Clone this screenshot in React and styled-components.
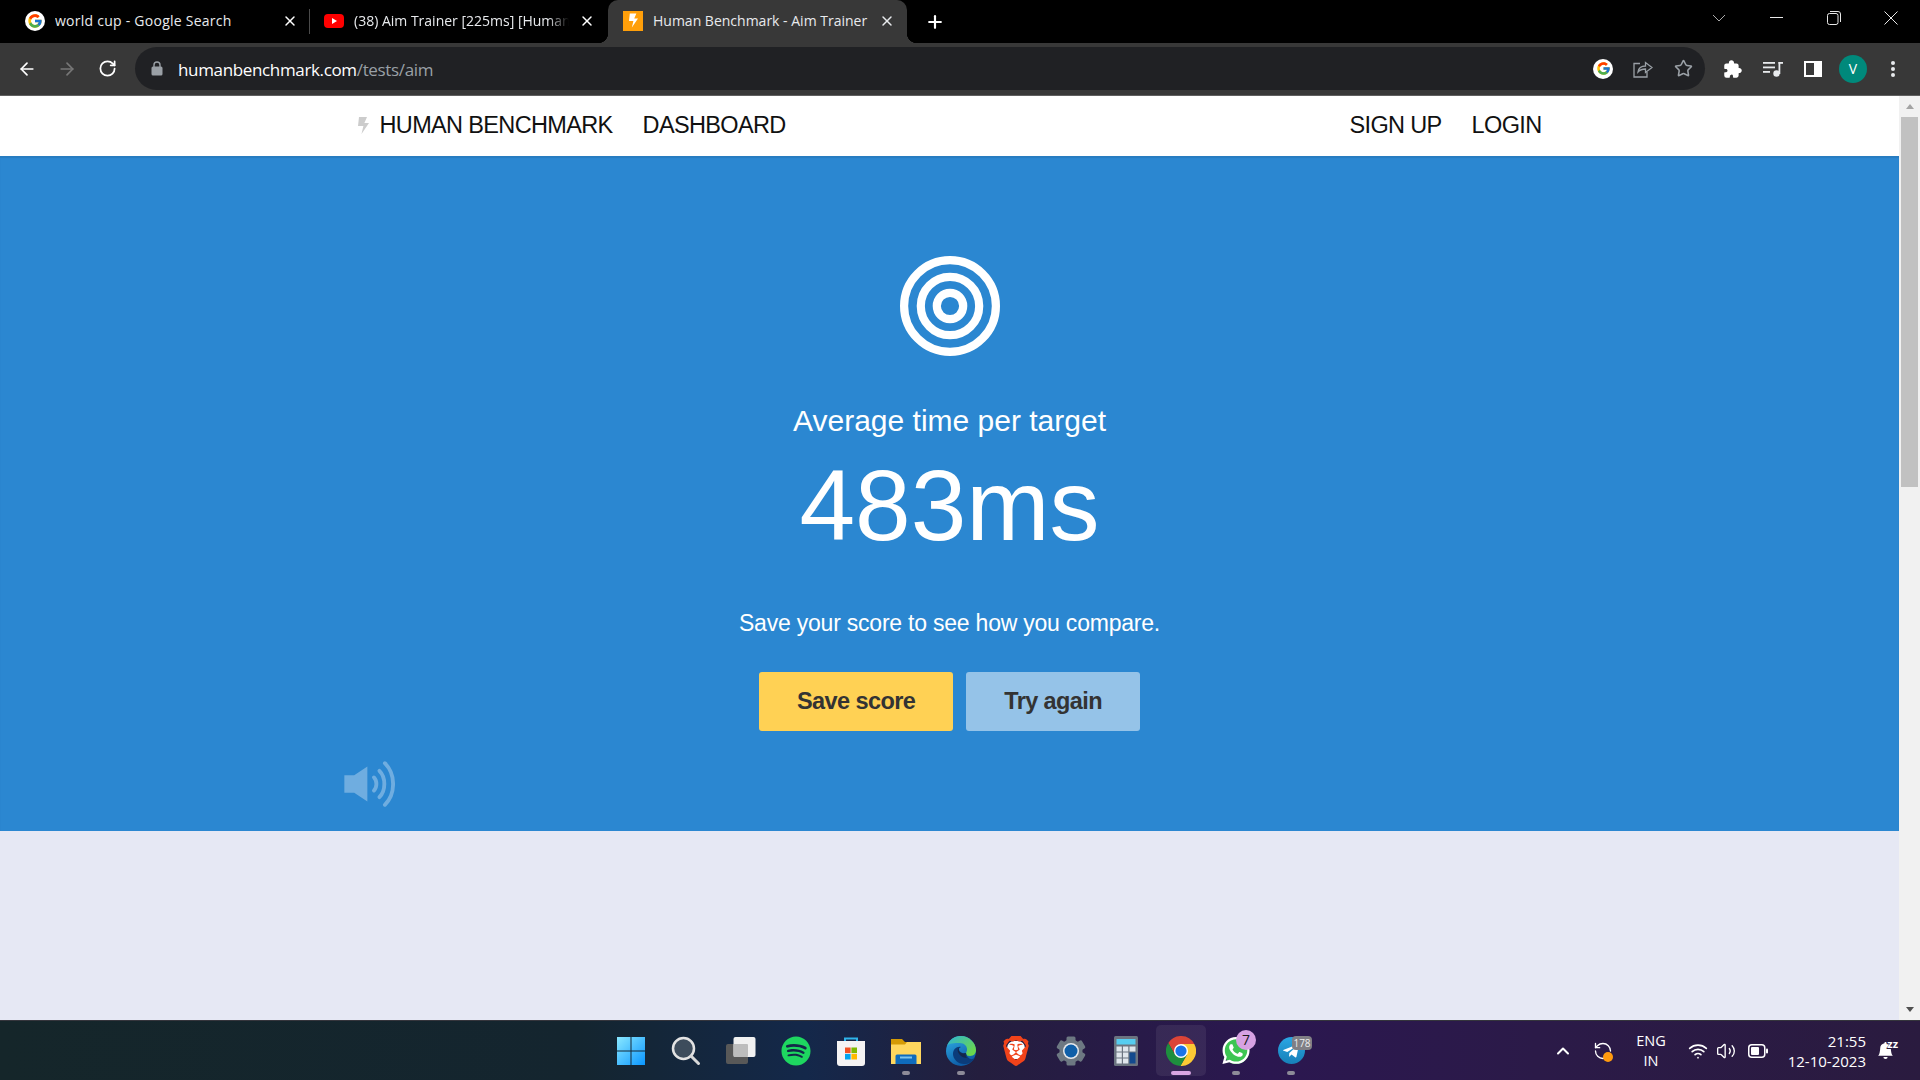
import React from 'react';
import styled, { createGlobalStyle } from 'styled-components';
import { ArrowLeft, ArrowRight, RotateCw, Star, X, Plus, ChevronUp, RefreshCcw, Wifi, Volume2 } from 'lucide-react';
import { FcGoogle } from 'react-icons/fc';
import { FaSpotify, FaWhatsapp, FaTelegramPlane } from 'react-icons/fa';
import { SiBrave } from 'react-icons/si';
import { IoExtensionPuzzle } from 'react-icons/io5';
import { BsBellFill } from 'react-icons/bs';

const GlobalStyle = createGlobalStyle`
  html, body { margin: 0; padding: 0; height: 100%; overflow: hidden; }
  body { font-family: "Liberation Sans", Arial, sans-serif; }
  * { box-sizing: border-box; }
`;

const Screen = styled.div`
  width: 1920px;
  height: 1080px;
  display: flex;
  flex-direction: column;
  background: #000;
`;

/* browser chrome */
const TabStrip = styled.div`
  height: 43px;
  flex: none;
  display: flex;
  background: #000;
  font-family: "Open Sans", sans-serif;
  font-size: 14px;
  color: #e8eaed;
`;

const Tab = styled.div`
  position: relative;
  width: ${p => p.$width}px;
  display: flex;
  align-items: center;
  gap: 10px;
  padding: 0 ${p => p.$right}px 2px ${p => p.$left}px;
  background: ${p => (p.$active ? '#383838' : 'transparent')};
  border-radius: ${p => (p.$active ? '10px 10px 0 0' : '0')};

  ${p => p.$active && `
    &::before, &::after {
      content: '';
      position: absolute;
      bottom: 0;
      width: 10px;
      height: 10px;
    }
    &::before { left: -10px; background: radial-gradient(circle at 0 0, transparent 10px, #383838 10.5px); }
    &::after { right: -10px; background: radial-gradient(circle at 100% 0, transparent 10px, #383838 10.5px); }
  `}
`;

const TabSeparator = styled.div`
  width: 1px;
  height: 25px;
  margin-top: 9px;
  background: #4a4a4a;
  flex: none;
`;

const TabTitle = styled.span`
  flex: 1;
  min-width: 0;
  white-space: nowrap;
  overflow: hidden;
  letter-spacing: ${p => p.$spacing || 0}px;
  ${p => p.$fade && `
    -webkit-mask-image: linear-gradient(90deg, #000 90%, transparent 100%);
    mask-image: linear-gradient(90deg, #000 90%, transparent 100%);
  `}
`;

const FaviconBox = styled.span`
  width: 20px;
  height: 20px;
  flex: none;
  display: flex;
  align-items: center;
  justify-content: center;
  border-radius: ${p => (p.$round ? '50%' : '0')};
  background: ${p => p.$bg || 'transparent'};
`;

const NewTab = styled.span`
  margin-left: 18px;
  display: flex;
  align-items: center;
  color: #fff;
`;

const WindowControls = styled.div`
  margin-left: auto;
  display: flex;
`;

const WindowButton = styled.span`
  width: 57.3px;
  height: 36px;
  display: flex;
  align-items: center;
  justify-content: center;
`;

const Toolbar = styled.div`
  height: 53px;
  flex: none;
  display: flex;
  align-items: center;
  padding: 0 7px 1px;
  background: #383838;
  border-bottom: 1px solid #5f5f5f;
`;

const ToolButton = styled.span`
  width: 40px;
  height: 40px;
  flex: none;
  display: flex;
  align-items: center;
  justify-content: center;
  color: ${p => p.$color || '#fff'};
`;

const Omnibox = styled.div`
  width: 1570px;
  height: 43px;
  margin: 0 8px;
  display: flex;
  align-items: center;
  gap: 15px;
  padding: 0 2px 0 16px;
  background: #202124;
  border-radius: 22px;
  font-family: "Open Sans", sans-serif;
  font-size: 17px;
  letter-spacing: -0.35px;
  color: #fff;
`;

const UrlText = styled.span`
  position: relative;
  top: 1px;
`;

const UrlPath = styled.span`
  color: #9aa0a6;
`;

const OmniActions = styled.div`
  margin-left: auto;
  display: flex;
`;

const Avatar = styled.span`
  width: 28px;
  height: 28px;
  border-radius: 50%;
  background: #00897b;
  color: #fff;
  font-family: "Open Sans", sans-serif;
  font-size: 14px;
  display: flex;
  align-items: center;
  justify-content: center;
`;

/* page */
const Viewport = styled.div`
  flex: 1;
  min-height: 0;
  display: flex;
`;

const Page = styled.div`
  flex: 1;
  min-width: 0;
  display: flex;
  flex-direction: column;
  background: #e6e8f4;
`;

const TopNav = styled.nav`
  height: 60px;
  flex: none;
  padding-bottom: 2px;
  background: #fff;
  display: flex;
  justify-content: center;
`;

const NavInner = styled.div`
  width: 1200px;
  padding: 0 8px;
  display: flex;
  align-items: center;
  gap: 30px;
  font-size: 23.5px;
  letter-spacing: -0.65px;
  color: #111;
`;

const Brand = styled.span`
  display: flex;
  align-items: center;
  gap: 11px;
`;

const NavRight = styled.div`
  margin-left: auto;
  display: flex;
  gap: 30px;
`;

const Hero = styled.section`
  height: 675px;
  flex: none;
  padding-top: 100px;
  display: flex;
  flex-direction: column;
  align-items: center;
  background: #2b87d1;
  box-shadow: inset 0 2px 1px rgba(0, 0, 0, 0.08);
  color: #fff;
`;

const Heading = styled.h2`
  margin: 45px 0 0;
  font-size: 30px;
  font-weight: 400;
  line-height: 40px;
`;

const Score = styled.div`
  margin-top: 14px;
  font-size: 100px;
  line-height: 100px;
`;

const Note = styled.p`
  margin: 52px 0 0;
  font-size: 23px;
  letter-spacing: -0.22px;
  line-height: 32px;
`;

const Buttons = styled.div`
  margin-top: 33px;
  display: flex;
  gap: 13px;
`;

const Button = styled.button`
  height: 59px;
  padding: 0 38px;
  border: 0;
  border-radius: 3px;
  font: bold 23.5px "Liberation Sans", Arial, sans-serif;
  letter-spacing: -0.6px;
  color: #333;
  background: ${p => (p.$primary ? '#ffd154' : '#95c3e8')};
`;

const SoundRow = styled.div`
  width: 1214px;
  margin-top: 30px;
  display: flex;
`;

/* scrollbar */
const Scrollbar = styled.div`
  width: 21px;
  flex: none;
  padding: 0 2px;
  display: flex;
  flex-direction: column;
  align-items: stretch;
  background: #f1f1f1;
`;

const ScrollArrow = styled.div`
  height: 21px;
  flex: none;
  display: flex;
  align-items: center;
  justify-content: center;
  &::before {
    content: '';
    border-left: 4.5px solid transparent;
    border-right: 4.5px solid transparent;
    ${p => (p.$down ? 'border-top: 5px solid #505050;' : 'border-bottom: 5px solid #a3a3a3;')}
  }
`;

const ScrollThumb = styled.div`
  height: 370px;
  background: #c1c1c1;
`;

const ScrollGap = styled.div`
  flex: 1;
`;

/* taskbar */
const Taskbar = styled.footer`
  height: 60px;
  flex: none;
  display: grid;
  grid-template-columns: 1fr auto 1fr;
  background: linear-gradient(90deg, #15262a 0%, #14252f 30%, #14284a 42%, #241e3e 51%, #2b1750 66%, #2b1a48 80%, #2a1b3f 100%);
  border-top: 1px solid #35353c;
  color: #fff;
`;

const TaskIcons = styled.div`
  grid-column: 2;
  padding-left: 2px;
  display: flex;
`;

const TaskItem = styled.div`
  position: relative;
  width: 55px;
  display: flex;
  align-items: center;
  justify-content: center;

  ${p => p.$active && `
    &::before {
      content: '';
      position: absolute;
      left: 2px;
      right: 3px;
      top: 4px;
      bottom: 4px;
      border-radius: 5px;
      background: rgba(255, 255, 255, 0.07);
    }
  `}
`;

const TaskGlyph = styled.span`
  position: relative;
  width: 30px;
  height: 30px;
  display: flex;
  align-items: center;
  justify-content: center;
`;

const RunDot = styled.span`
  position: absolute;
  left: 50%;
  bottom: 5px;
  width: ${p => (p.$active ? 20 : 8)}px;
  height: 4px;
  transform: translateX(-50%);
  border-radius: 2px;
  background: ${p => (p.$active ? '#d9a5e2' : '#8d8b98')};
`;

const Badge = styled.span`
  position: absolute;
  top: ${p => (p.$gray ? '0' : '-6px')};
  right: ${p => (p.$gray ? '-6px' : '-5px')};
  width: 20px;
  height: ${p => (p.$gray ? '14px' : '20px')};
  display: flex;
  align-items: center;
  justify-content: center;
  border-radius: ${p => (p.$gray ? '4px' : '50%')};
  background: ${p => (p.$gray ? '#807f85' : '#d7a2e3')};
  color: ${p => (p.$gray ? '#eee' : '#1c1c1c')};
  font-family: "Open Sans", sans-serif;
  font-size: ${p => (p.$gray ? '10px' : '14px')};
`;

const WhiteDisc = styled.span`
  position: absolute;
  inset: 5px 6px 7px;
  background: #fff;
  border-radius: 40%;
`;

const GreenDisc = styled.span`
  position: absolute;
  inset: 2px;
  background: #3dc552;
  border-radius: 50%;
`;

const BlueDisc = styled.span`
  position: absolute;
  inset: 1.5px;
  border-radius: 50%;
  background: linear-gradient(180deg, #2aa6e4, #1780b8);
`;

const Tray = styled.div`
  grid-column: 3;
  display: flex;
  align-items: center;
  padding-left: 224.5px;
  font-family: "Open Sans", sans-serif;
  font-size: 14.5px;
  color: #fff;
`;

const TrayIcon = styled.span`
  position: relative;
  width: ${p => p.$w}px;
  height: 40px;
  flex: none;
  display: flex;
  align-items: center;
  justify-content: center;
`;

const SyncDot = styled.span`
  position: absolute;
  right: 10px;
  bottom: 9px;
  width: 10px;
  height: 10px;
  border-radius: 50%;
  background: #ff9a0e;
`;

const Lang = styled.div`
  width: 56px;
  flex: none;
  margin-right: 5px;
  text-align: center;
  line-height: 20px;
`;

const Clock = styled.div`
  width: 90px;
  flex: none;
  font-size: 15px;
  text-align: right;
  line-height: 20px;
  white-space: nowrap;
`;

const Snooze = styled.span`
  position: absolute;
  top: 8px;
  right: 6px;
  font-size: 11px;
  font-weight: 700;
  line-height: 9px;
  color: #fff;
  text-shadow: -1px 1px 0 #2a1b3f;
`;

const GoogleFavicon = ({ size = 16 }) => <FcGoogle size={size} />;

const YoutubeIcon = () => (
  <svg width="20" height="14" viewBox="0 0 20 14">
    <rect width="20" height="14" rx="4" fill="#f00" />
    <path d="M8 4l5 3-5 3z" fill="#fff" />
  </svg>
);

const BoltIcon = ({ width, height, color }) => (
  <svg width={width} height={height} viewBox="0 0 11 17">
    <path d="M1 0h8L6.4 6H11L3.5 17 5.4 9H0z" fill={color} />
  </svg>
);

const LockIcon = () => (
  <svg width="12" height="15" viewBox="0 0 12 15">
    <path d="M3 6V4a3 3 0 016 0v2" fill="none" stroke="#9aa0a6" strokeWidth="1.4" />
    <rect x="0.5" y="5.5" width="11" height="9" rx="1.5" fill="#9aa0a6" />
  </svg>
);

const ShareIcon = () => (
  <svg width="20" height="18" viewBox="0 0 20 18" fill="none" stroke="#9aa0a6" strokeWidth="1.3">
    <path d="M7 3.5H1V17h13v-5" />
    <path d="M5 12c.5-3.5 3-6 7.5-6V2.5L19 7.5l-6.5 5V9C9 9 6.8 10 5 12z" />
  </svg>
);

const MediaIcon = () => (
  <svg width="20" height="16" viewBox="0 0 20 16" fill="#e8eaed">
    <rect y="1" width="12" height="1.8" />
    <rect y="5.5" width="12" height="1.8" />
    <rect y="10" width="7" height="1.8" />
    <rect x="15.5" y="1" width="4.5" height="1.8" />
    <rect x="15.5" y="1" width="1.8" height="12" />
    <circle cx="13.5" cy="12.5" r="3.2" />
  </svg>
);

const SidebarIcon = () => (
  <svg width="18" height="16" viewBox="0 0 18 16">
    <path fillRule="evenodd" d="M0 0h18v16H0zM2 2v12h8V2z" fill="#fff" />
  </svg>
);

const DotsIcon = () => (
  <svg width="6" height="18" viewBox="0 0 6 18" fill="#e8eaed">
    <circle cx="3" cy="3" r="2" />
    <circle cx="3" cy="9" r="2" />
    <circle cx="3" cy="15" r="2" />
  </svg>
);

const TargetIcon = () => (
  <svg width="100" height="100" viewBox="0 0 100 100" fill="none" stroke="#fff" strokeWidth="8.2">
    <circle cx="50" cy="50" r="45.9" />
    <circle cx="50" cy="50" r="29.2" />
    <circle cx="50" cy="50" r="13.2" />
  </svg>
);

const SoundIcon = () => (
  <svg width="52" height="46" viewBox="0 1 47 42" fill="none" stroke="#fff" strokeOpacity="0.32" strokeWidth="3.5" strokeLinecap="round">
    <path d="M1 14h9L22 6v32l-12-8H1z" fill="#fff" fillOpacity="0.32" stroke="none" />
    <path d="M28 16c3 3 3 9 0 12" />
    <path d="M33 10c6 6 6 18 0 24" />
    <path d="M38 3c10 10 10 28 0 38" />
  </svg>
);

const WindowsIcon = () => (
  <svg width="30" height="30" viewBox="0 0 30 30">
    <defs>
      <linearGradient id="win" x1="0" y1="0" x2="1" y2="1">
        <stop offset="0" stopColor="#8ae8ff" />
        <stop offset="1" stopColor="#0a96ff" />
      </linearGradient>
    </defs>
    <path d="M1 1h13.5v13.5H1zM15.5 1H29v13.5H15.5zM1 15.5h13.5V29H1zM15.5 15.5H29V29H15.5z" fill="url(#win)" />
  </svg>
);

const SearchIcon = () => (
  <svg width="30" height="30" viewBox="0 0 30 30">
    <circle cx="12.5" cy="12.5" r="10.5" fill="#3d4c5c" stroke="#e3e3e3" strokeWidth="2.5" />
    <path d="M20 20l7.5 7.5" stroke="#d8d8d8" strokeWidth="3" strokeLinecap="round" />
  </svg>
);

const TaskViewIcon = () => (
  <svg width="30" height="30" viewBox="0 0 30 30">
    <rect x="0" y="8" width="22" height="20" rx="2" fill="#585858" />
    <rect x="7.5" y="1" width="22" height="20" rx="2" fill="#f1f1f1" />
    <rect x="7.5" y="8" width="14.5" height="13" rx="1" fill="#bdbdbd" />
  </svg>
);

const StoreIcon = () => (
  <svg width="30" height="30" viewBox="0 0 30 30">
    <path d="M9 6V2.5h12V6" fill="none" stroke="#2fb4ea" strokeWidth="2" />
    <path d="M1 5h28v22a3 3 0 01-3 3H4a3 3 0 01-3-3z" fill="#f5f3f3" />
    <rect x="9" y="11.5" width="5.6" height="5.6" fill="#f25022" />
    <rect x="15.4" y="11.5" width="5.6" height="5.6" fill="#7fba00" />
    <rect x="9" y="17.9" width="5.6" height="5.6" fill="#00a4ef" />
    <rect x="15.4" y="17.9" width="5.6" height="5.6" fill="#ffb900" />
  </svg>
);

const FolderIcon = () => (
  <svg width="30" height="30" viewBox="0 0 30 30">
    <path d="M0 3h11l3 3h16v3H0z" fill="#d49a05" />
    <path d="M0 8.5h14l2-2.500h14v22H0z" fill="#ffd75e" />
    <path d="M4.500 20A1.500 1.500 0 016 18.500h18a1.500 1.500 0 011.500 1.500v8h-21z" fill="#0f6cbd" />
    <rect x="9" y="20.500" width="12" height="2" fill="#7cc4ee" />
  </svg>
);

const EdgeIcon = () => (
  <svg width="30" height="30" viewBox="0 0 30 30">
    <defs>
      <linearGradient id="edgeBlue" x1="0" y1="0" x2="0.5" y2="1">
        <stop offset="0" stopColor="#30b0e8" />
        <stop offset="1" stopColor="#0c59a4" />
      </linearGradient>
      <linearGradient id="edgeGreen" x1="0" y1="0" x2="1" y2="0.7">
        <stop offset="0" stopColor="#2cb3d8" />
        <stop offset="1" stopColor="#6cd84a" />
      </linearGradient>
    </defs>
    <circle cx="15" cy="15" r="15" fill="url(#edgeBlue)" />
    <path d="M1 10C4 2 10 0 15 0c8 0 15 7 15 14 0 3-2 6-6 6-3 0-4-1-4-2 0-2 1-2 1-5 0-3-3-6-7-6C8 7 3 7 1 10z" fill="url(#edgeGreen)" />
    <path d="M20 17c-3 1-7-1-7-4 0-1 1-2 2-2-4-1-8 2-8 7 0 5 5 10 11 10 5 0 8-2 11-6-3 2-7 2-9-5z" fill="#0b3c7a" />
    <path d="M15 11c-2 0-3 2-2 4 1 2 4 3 7 2-1 2 0 4 1 5-4 0-8-3-9-6-1-3 1-5 3-5z" fill="#14274a" />
  </svg>
);

const GearIcon = () => (
  <svg width="30" height="30" viewBox="0 0 30 30">
    <g fill="#6d7882">
      <circle cx="15" cy="15" r="11.5" />
      {[0, 60, 120, 180, 240, 300].map(a => (
        <rect key={a} x="10.5" y="0.5" width="9" height="7" rx="1.5" transform={`rotate(${a} 15 15)`} />
      ))}
    </g>
    <circle cx="15" cy="15" r="8" fill="#e6e9ec" />
    <circle cx="15" cy="15" r="6.5" fill="#0f5fa8" />
  </svg>
);

const CalcIcon = () => (
  <svg width="24" height="30" viewBox="0 0 24 30">
    <rect width="24" height="30" rx="1.5" fill="#6b7480" />
    <rect x="2.5" y="3" width="19" height="5.5" fill="#56cdf0" />
    {[0, 1, 2].flatMap(r => [0, 1].map(c => (
      <rect key={`${r}${c}`} x={2.5 + c * 6.5} y={10.5 + r * 6} width="5.3" height="5" fill="#e0e6ec" />
    )))}
    <rect x="15.5" y="10.5" width="6" height="5" fill="#e0e6ec" />
    <rect x="15.5" y="16.5" width="6" height="11" fill="#134a8e" />
  </svg>
);

const ChromeIcon = () => (
  <svg width="30" height="30" viewBox="0 0 30 30">
    <path d="M15 8L28.27 8A15 15 0 0 0 2.3 7.01L8.94 18.5Z" fill="#db4437" />
    <path d="M15 8L28.27 8A15 15 0 0 1 14.43 30L21.06 18.5Z" fill="#fcc934" />
    <path d="M8.94 18.5L2.3 7.01A15 15 0 0 0 14.43 30L21.06 18.5Z" fill="#1e8e3e" />
    <circle cx="15" cy="15" r="7" fill="#fff" />
    <circle cx="15" cy="15" r="5.6" fill="#1a73e8" />
  </svg>
);

const BatteryIcon = () => (
  <svg width="20" height="14" viewBox="0 0 20 14">
    <rect x="0.75" y="0.75" width="16" height="12.5" rx="3" fill="none" stroke="#fff" strokeWidth="1.5" />
    <rect x="3" y="3" width="8" height="8" rx="1" fill="#fff" />
    <rect x="18" y="4.5" width="2" height="5" rx="1" fill="#fff" />
  </svg>
);

const taskApps = [
  { key: 'start', icon: <WindowsIcon /> },
  { key: 'search', icon: <SearchIcon /> },
  { key: 'view', icon: <TaskViewIcon /> },
  { key: 'spotify', icon: <FaSpotify size={30} color="#1ed760" /> },
  { key: 'store', icon: <StoreIcon /> },
  { key: 'folder', icon: <FolderIcon />, running: true },
  { key: 'edge', icon: <EdgeIcon />, running: true },
  { key: 'brave', icon: <><WhiteDisc /><SiBrave size={30} color="#f1431a" style={{ position: 'relative' }} /></> },
  { key: 'settings', icon: <GearIcon /> },
  { key: 'calc', icon: <CalcIcon /> },
  { key: 'chrome', icon: <ChromeIcon />, running: true, active: true },
  {
    key: 'whatsapp',
    running: true,
    icon: <><GreenDisc /><FaWhatsapp size={31} color="#fff" style={{ position: 'relative' }} /><Badge>7</Badge></>,
  },
  {
    key: 'telegram',
    running: true,
    icon: <><BlueDisc /><FaTelegramPlane size={18} color="#fff" style={{ position: 'relative' }} /><Badge $gray>178</Badge></>,
  },
];

const App = () => (
  <Screen>
    <GlobalStyle />
    <TabStrip>
      <Tab $width={309} $left={25} $right={11}>
        <FaviconBox $round $bg="#fff"><GoogleFavicon /></FaviconBox>
        <TabTitle $spacing={0.25}>world cup - Google Search</TabTitle>
        <X size={16} color="#fff" strokeWidth={2.2} />
      </Tab>
      <TabSeparator />
      <Tab $width={298} $left={14} $right={13}>
        <FaviconBox><YoutubeIcon /></FaviconBox>
        <TabTitle $fade>(38) Aim Trainer [225ms] [Human</TabTitle>
        <X size={16} color="#fff" strokeWidth={2.2} />
      </Tab>
      <Tab $active $width={299} $left={15} $right={12}>
        <FaviconBox $bg="#ff9f0a"><BoltIcon width={9} height={15} color="#fff" /></FaviconBox>
        <TabTitle>Human Benchmark - Aim Trainer</TabTitle>
        <X size={16} color="#e8eaed" strokeWidth={2.2} />
      </Tab>
      <NewTab><Plus size={20} strokeWidth={2.6} /></NewTab>
      <WindowControls>
        <WindowButton>
          <svg width="14" height="8" viewBox="0 0 14 8" fill="none" stroke="#aaa"><path d="M1 1l6 6 6-6" /></svg>
        </WindowButton>
        <WindowButton>
          <svg width="13" height="2" viewBox="0 0 13 2"><rect width="13" height="1" fill="#e8e8e8" /></svg>
        </WindowButton>
        <WindowButton>
          <svg width="14" height="14" viewBox="0 0 14 14" fill="none" stroke="#e8e8e8">
            <rect x="0.5" y="2.5" width="10.5" height="11" rx="2" />
            <path d="M3 .5h8A2.5 2.5 0 0113.5 3v8" />
          </svg>
        </WindowButton>
        <WindowButton>
          <svg width="14" height="14" viewBox="0 0 14 14" stroke="#e8e8e8"><path d="M.5.5l13 13M13.5.5l-13 13" /></svg>
        </WindowButton>
      </WindowControls>
    </TabStrip>

    <Toolbar>
      <ToolButton><ArrowLeft size={20} strokeWidth={2} /></ToolButton>
      <ToolButton $color="#777"><ArrowRight size={20} strokeWidth={2} /></ToolButton>
      <ToolButton><RotateCw size={19} strokeWidth={2.2} /></ToolButton>
      <Omnibox>
        <LockIcon />
        <UrlText>humanbenchmark.com<UrlPath>/tests/aim</UrlPath></UrlText>
        <OmniActions>
          <ToolButton>
            <FaviconBox $round $bg="#fff"><GoogleFavicon size={15} /></FaviconBox>
          </ToolButton>
          <ToolButton><ShareIcon /></ToolButton>
          <ToolButton $color="#9aa0a6"><Star size={19} strokeWidth={2} /></ToolButton>
        </OmniActions>
      </Omnibox>
      <ToolButton><IoExtensionPuzzle size={20} /></ToolButton>
      <ToolButton><MediaIcon /></ToolButton>
      <ToolButton><SidebarIcon /></ToolButton>
      <ToolButton><Avatar>V</Avatar></ToolButton>
      <ToolButton><DotsIcon /></ToolButton>
    </Toolbar>

    <Viewport>
      <Page>
        <TopNav>
          <NavInner>
            <Brand>
              <BoltIcon width={11} height={17} color="#ccc" />
              HUMAN BENCHMARK
            </Brand>
            <span>DASHBOARD</span>
            <NavRight>
              <span>SIGN UP</span>
              <span>LOGIN</span>
            </NavRight>
          </NavInner>
        </TopNav>
        <Hero>
          <TargetIcon />
          <Heading>Average time per target</Heading>
          <Score>483ms</Score>
          <Note>Save your score to see how you compare.</Note>
          <Buttons>
            <Button $primary>Save score</Button>
            <Button>Try again</Button>
          </Buttons>
          <SoundRow><SoundIcon /></SoundRow>
        </Hero>
      </Page>
      <Scrollbar>
        <ScrollArrow />
        <ScrollThumb />
        <ScrollGap />
        <ScrollArrow $down />
      </Scrollbar>
    </Viewport>

    <Taskbar>
      <TaskIcons>
        {taskApps.map(app => (
          <TaskItem key={app.key} $active={app.active}>
            <TaskGlyph>{app.icon}</TaskGlyph>
            {app.running && <RunDot $active={app.active} />}
          </TaskItem>
        ))}
      </TaskIcons>
      <Tray>
        <TrayIcon $w={40}><ChevronUp size={20} strokeWidth={2.4} /></TrayIcon>
        <TrayIcon $w={40}>
          <RefreshCcw size={20} strokeWidth={1.6} />
          <SyncDot />
        </TrayIcon>
        <Lang>ENG<br />IN</Lang>
        <TrayIcon $w={28}><Wifi size={20} strokeWidth={2} /></TrayIcon>
        <TrayIcon $w={28}><Volume2 size={20} strokeWidth={1.6} /></TrayIcon>
        <TrayIcon $w={36}><BatteryIcon /></TrayIcon>
        <Clock>21:55<br />12-10-2023</Clock>
        <TrayIcon $w={38}>
          <BsBellFill size={17} />
          <Snooze>zz</Snooze>
        </TrayIcon>
      </Tray>
    </Taskbar>
  </Screen>
);

export default App;
